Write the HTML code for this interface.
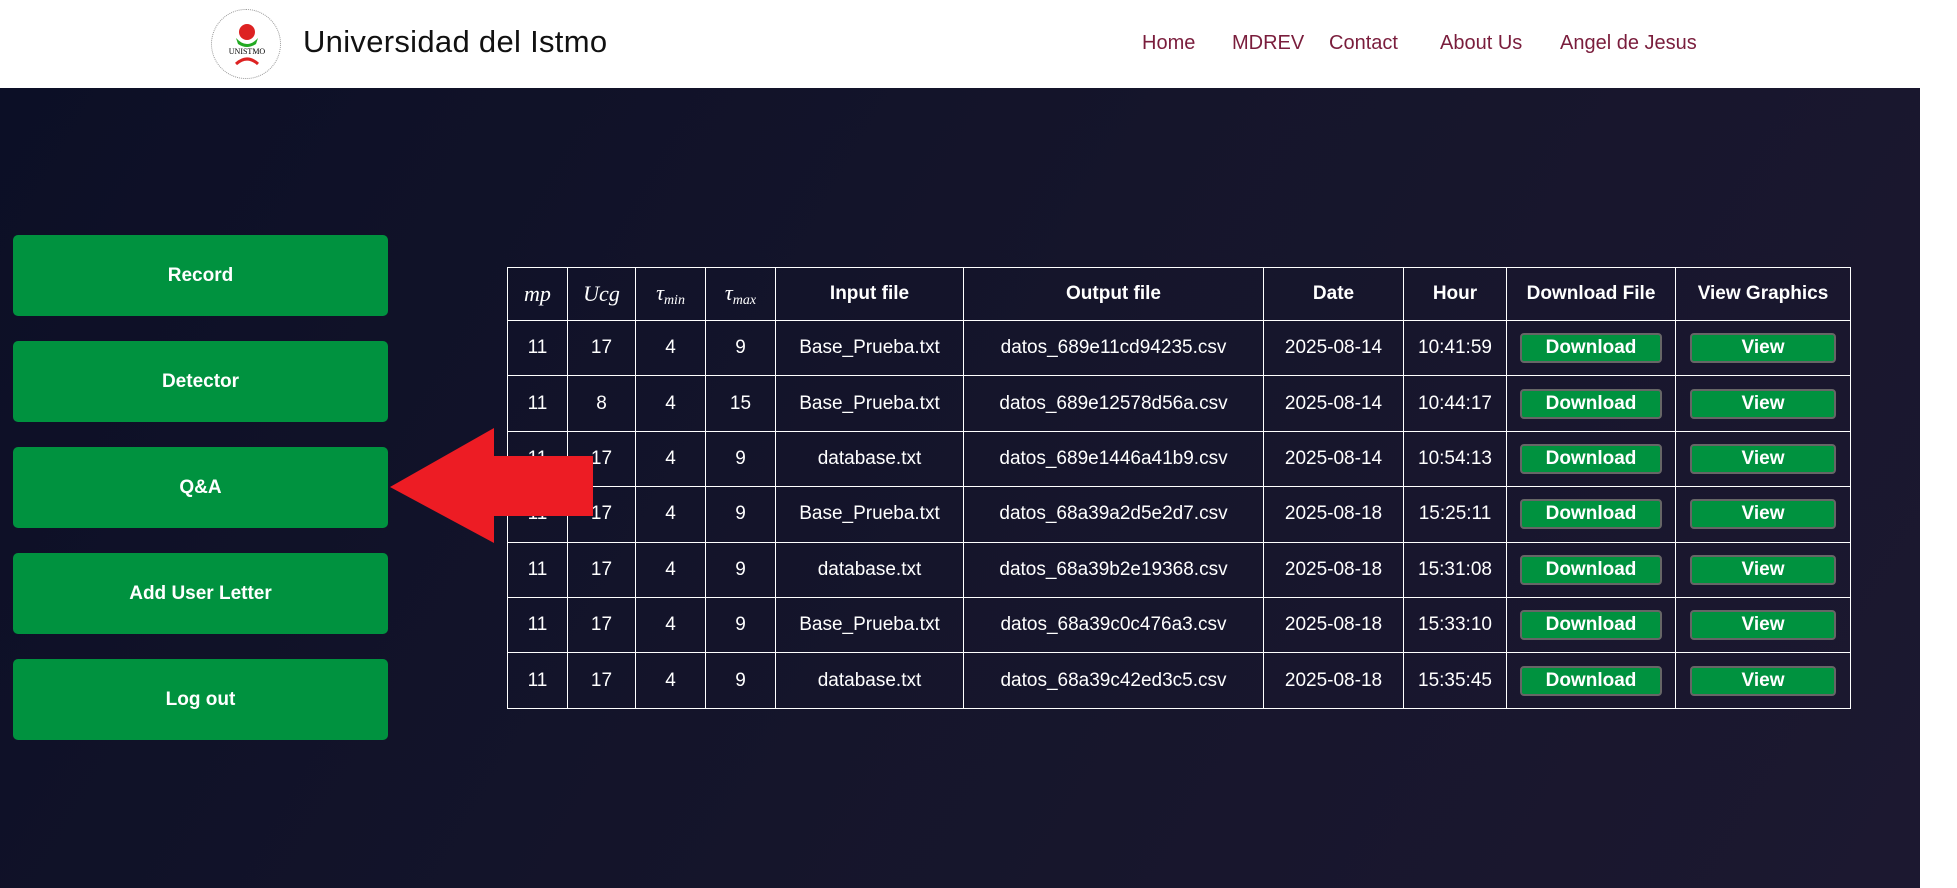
<!DOCTYPE html>
<html><head><meta charset="utf-8"><style>
*{margin:0;padding:0;box-sizing:border-box}
body{width:1957px;height:888px;overflow:hidden;font-family:"Liberation Sans",sans-serif;background:#fff;position:relative}
.hdr{position:absolute;left:0;top:0;width:1957px;height:88px;background:#fff}
.main{position:absolute;left:0;top:88px;width:1920px;height:800px;background:linear-gradient(120deg,#0c0f26 0%,#15152b 50%,#1c1830 100%)}
.logo{position:absolute;left:211px;top:9px;width:70px;height:70px;border-radius:50%;border:1px dotted #999;background:#fff}
.title{position:absolute;left:303px;top:24px;font-size:31px;color:#111;letter-spacing:0.3px}
.nav{position:absolute;top:32px;font-size:20px;color:#7a1d3c}
.btn{position:absolute;left:13px;width:375px;height:81px;background:#00923f;border-radius:5px;color:#fff;font-weight:bold;font-size:19px;display:flex;align-items:center;justify-content:center}
table{position:absolute;left:507px;top:267px;border-collapse:collapse;color:#fff;font-size:19px}
td,th{border:1.5px solid #fff;text-align:center;height:55.4px;padding:0}
th{height:53px;font-weight:bold;font-size:19px}
th.m{font-family:"Liberation Serif",serif;font-style:italic;font-weight:normal;font-size:22px}
th.m sub{font-size:14px;vertical-align:-4px}
.b{display:inline-block;background:#00923f;border:2px solid #666;border-radius:4px;font-weight:bold;height:30px;line-height:26px;font-size:19px}
.d{width:142px}.v{width:146px}
</style></head><body>
<div class="hdr">
<div class="logo"><svg width="70" height="70"><circle cx="35" cy="22" r="8" fill="#d22"/><path d="M24 28 Q35 40 46 28 L44 34 Q35 40 26 34Z" fill="#2a2"/><text x="35" y="44" font-size="8" text-anchor="middle" font-family="Liberation Serif">UNISTMO</text><path d="M24 54 Q35 44 46 54" stroke="#d22" stroke-width="3" fill="none"/></svg></div>
<div class="title">Universidad del Istmo</div>
<div class="nav" style="left:1142px">Home</div>
<div class="nav" style="left:1232px">MDREV</div>
<div class="nav" style="left:1329px">Contact</div>
<div class="nav" style="left:1440px">About Us</div>
<div class="nav" style="left:1560px">Angel de Jesus</div>
</div>
<div class="main"></div>
<div class="btn" style="top:235px">Record</div>
<div class="btn" style="top:341px">Detector</div>
<div class="btn" style="top:447px">Q&amp;A</div>
<div class="btn" style="top:553px">Add User Letter</div>
<div class="btn" style="top:659px">Log out</div>
<table>
<tr><th class="m" style="width:60px">mp</th><th class="m" style="width:68px">Ucg</th><th class="m" style="width:70px">τ<sub>min</sub></th><th class="m" style="width:70px">τ<sub>max</sub></th><th style="width:188px">Input file</th><th style="width:300px">Output file</th><th style="width:140px">Date</th><th style="width:103px">Hour</th><th style="width:169px">Download File</th><th style="width:175px">View Graphics</th></tr>
<tr><td>11</td><td>17</td><td>4</td><td>9</td><td>Base_Prueba.txt</td><td>datos_689e11cd94235.csv</td><td>2025-08-14</td><td>10:41:59</td><td><span class="b d">Download</span></td><td><span class="b v">View</span></td></tr>
<tr><td>11</td><td>8</td><td>4</td><td>15</td><td>Base_Prueba.txt</td><td>datos_689e12578d56a.csv</td><td>2025-08-14</td><td>10:44:17</td><td><span class="b d">Download</span></td><td><span class="b v">View</span></td></tr>
<tr><td>11</td><td>17</td><td>4</td><td>9</td><td>database.txt</td><td>datos_689e1446a41b9.csv</td><td>2025-08-14</td><td>10:54:13</td><td><span class="b d">Download</span></td><td><span class="b v">View</span></td></tr>
<tr><td>11</td><td>17</td><td>4</td><td>9</td><td>Base_Prueba.txt</td><td>datos_68a39a2d5e2d7.csv</td><td>2025-08-18</td><td>15:25:11</td><td><span class="b d">Download</span></td><td><span class="b v">View</span></td></tr>
<tr><td>11</td><td>17</td><td>4</td><td>9</td><td>database.txt</td><td>datos_68a39b2e19368.csv</td><td>2025-08-18</td><td>15:31:08</td><td><span class="b d">Download</span></td><td><span class="b v">View</span></td></tr>
<tr><td>11</td><td>17</td><td>4</td><td>9</td><td>Base_Prueba.txt</td><td>datos_68a39c0c476a3.csv</td><td>2025-08-18</td><td>15:33:10</td><td><span class="b d">Download</span></td><td><span class="b v">View</span></td></tr>
<tr><td>11</td><td>17</td><td>4</td><td>9</td><td>database.txt</td><td>datos_68a39c42ed3c5.csv</td><td>2025-08-18</td><td>15:35:45</td><td><span class="b d">Download</span></td><td><span class="b v">View</span></td></tr>
</table>
<svg style="position:absolute;left:0;top:0" width="1957" height="888"><polygon points="390,487 494,428 494,456 593,456 593,516 494,516 494,543" fill="#ed1c24"/></svg>
</body></html>
